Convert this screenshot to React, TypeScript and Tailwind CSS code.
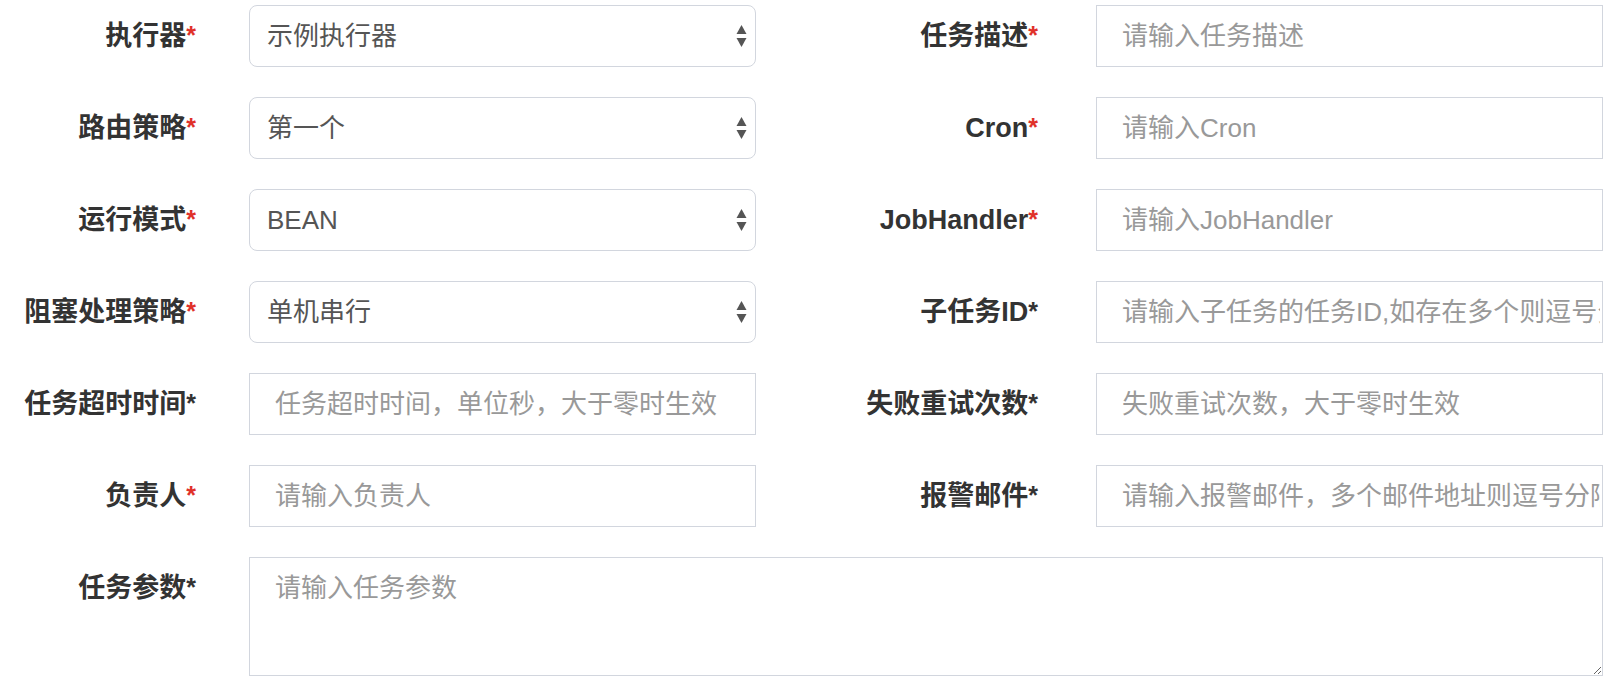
import React from 'react'

type Field = {
  label: string
  red: boolean
  kind: 'select' | 'input'
  value?: string
  placeholder?: string
}

const leftFields: Field[] = [
  { label: '执行器', red: true, kind: 'select', value: '示例执行器' },
  { label: '路由策略', red: true, kind: 'select', value: '第一个' },
  { label: '运行模式', red: true, kind: 'select', value: 'BEAN' },
  { label: '阻塞处理策略', red: true, kind: 'select', value: '单机串行' },
  { label: '任务超时时间', red: false, kind: 'input', placeholder: '任务超时时间，单位秒，大于零时生效' },
  { label: '负责人', red: true, kind: 'input', placeholder: '请输入负责人' },
]

const rightFields: Field[] = [
  { label: '任务描述', red: true, kind: 'input', placeholder: '请输入任务描述' },
  { label: 'Cron', red: true, kind: 'input', placeholder: '请输入Cron' },
  { label: 'JobHandler', red: true, kind: 'input', placeholder: '请输入JobHandler' },
  { label: '子任务ID', red: false, kind: 'input', placeholder: '请输入子任务的任务ID,如存在多个则逗号分隔' },
  { label: '失败重试次数', red: false, kind: 'input', placeholder: '失败重试次数，大于零时生效' },
  { label: '报警邮件', red: false, kind: 'input', placeholder: '请输入报警邮件，多个邮件地址则逗号分隔' },
]

const font = { fontFamily: '"Liberation Sans", "Noto Sans CJK SC", sans-serif' }

function Label({ text, red, width }: { text: string; red: boolean; width: string }) {
  return (
    <label className={`${width} h-[62px] flex items-center justify-end shrink-0 text-[27px] font-bold text-[#333]`}>
      {text}
      <span className={red ? 'text-[#e0312a] text-[25px]' : 'text-[#333] text-[25px]'}>*</span>
    </label>
  )
}

function SelectArrows() {
  return (
    <svg width="11" height="24" viewBox="0 0 11 24" className="shrink-0">
      <path d="M5.5 1 L10.5 10 L0.5 10 Z" fill="#555" />
      <path d="M5.5 23 L10.5 14 L0.5 14 Z" fill="#555" />
    </svg>
  )
}

function Control({ field }: { field: Field }) {
  if (field.kind === 'select') {
    return (
      <div className="w-[507px] h-[62px] shrink-0 flex items-center justify-between pl-[17px] pr-[8px] border border-[#d2d6de] rounded-[8px] bg-white text-[26px] text-[#555]">
        <span>{field.value}</span>
        <SelectArrows />
      </div>
    )
  }
  return (
    <input
      placeholder={field.placeholder}
      className="w-[507px] h-[62px] shrink-0 pl-[25px] pr-[2px] border border-[#d2d6de] bg-white text-[26px] text-[#555] placeholder:text-[#999] outline-none"
      style={font}
    />
  )
}

export default function App() {
  return (
    <div className="w-[1614px] h-[680px] bg-white pt-[5px] overflow-hidden" style={font}>
      <div className="flex flex-col gap-[30px]">
        {leftFields.map((lf, i) => {
          const rf = rightFields[i]
          return (
            <div key={lf.label} className="flex items-center">
              <Label text={lf.label} red={lf.red} width="w-[196px]" />
              <div className="ml-[53px]">
                <Control field={lf} />
              </div>
              <Label text={rf.label} red={rf.red} width="w-[282px]" />
              <div className="ml-[58px]">
                <Control field={rf} />
              </div>
            </div>
          )
        })}

        {/* 任务参数 */}
        <div className="flex items-start">
          <Label text="任务参数" red={false} width="w-[196px]" />
          <textarea
            placeholder="请输入任务参数"
            className="ml-[53px] w-[1354px] h-[119px] pt-[14px] pl-[25px] border border-[#d2d6de] bg-white text-[26px] leading-[1.3] text-[#555] placeholder:text-[#999] outline-none resize-y"
            style={font}
          />
        </div>
      </div>
    </div>
  )
}
